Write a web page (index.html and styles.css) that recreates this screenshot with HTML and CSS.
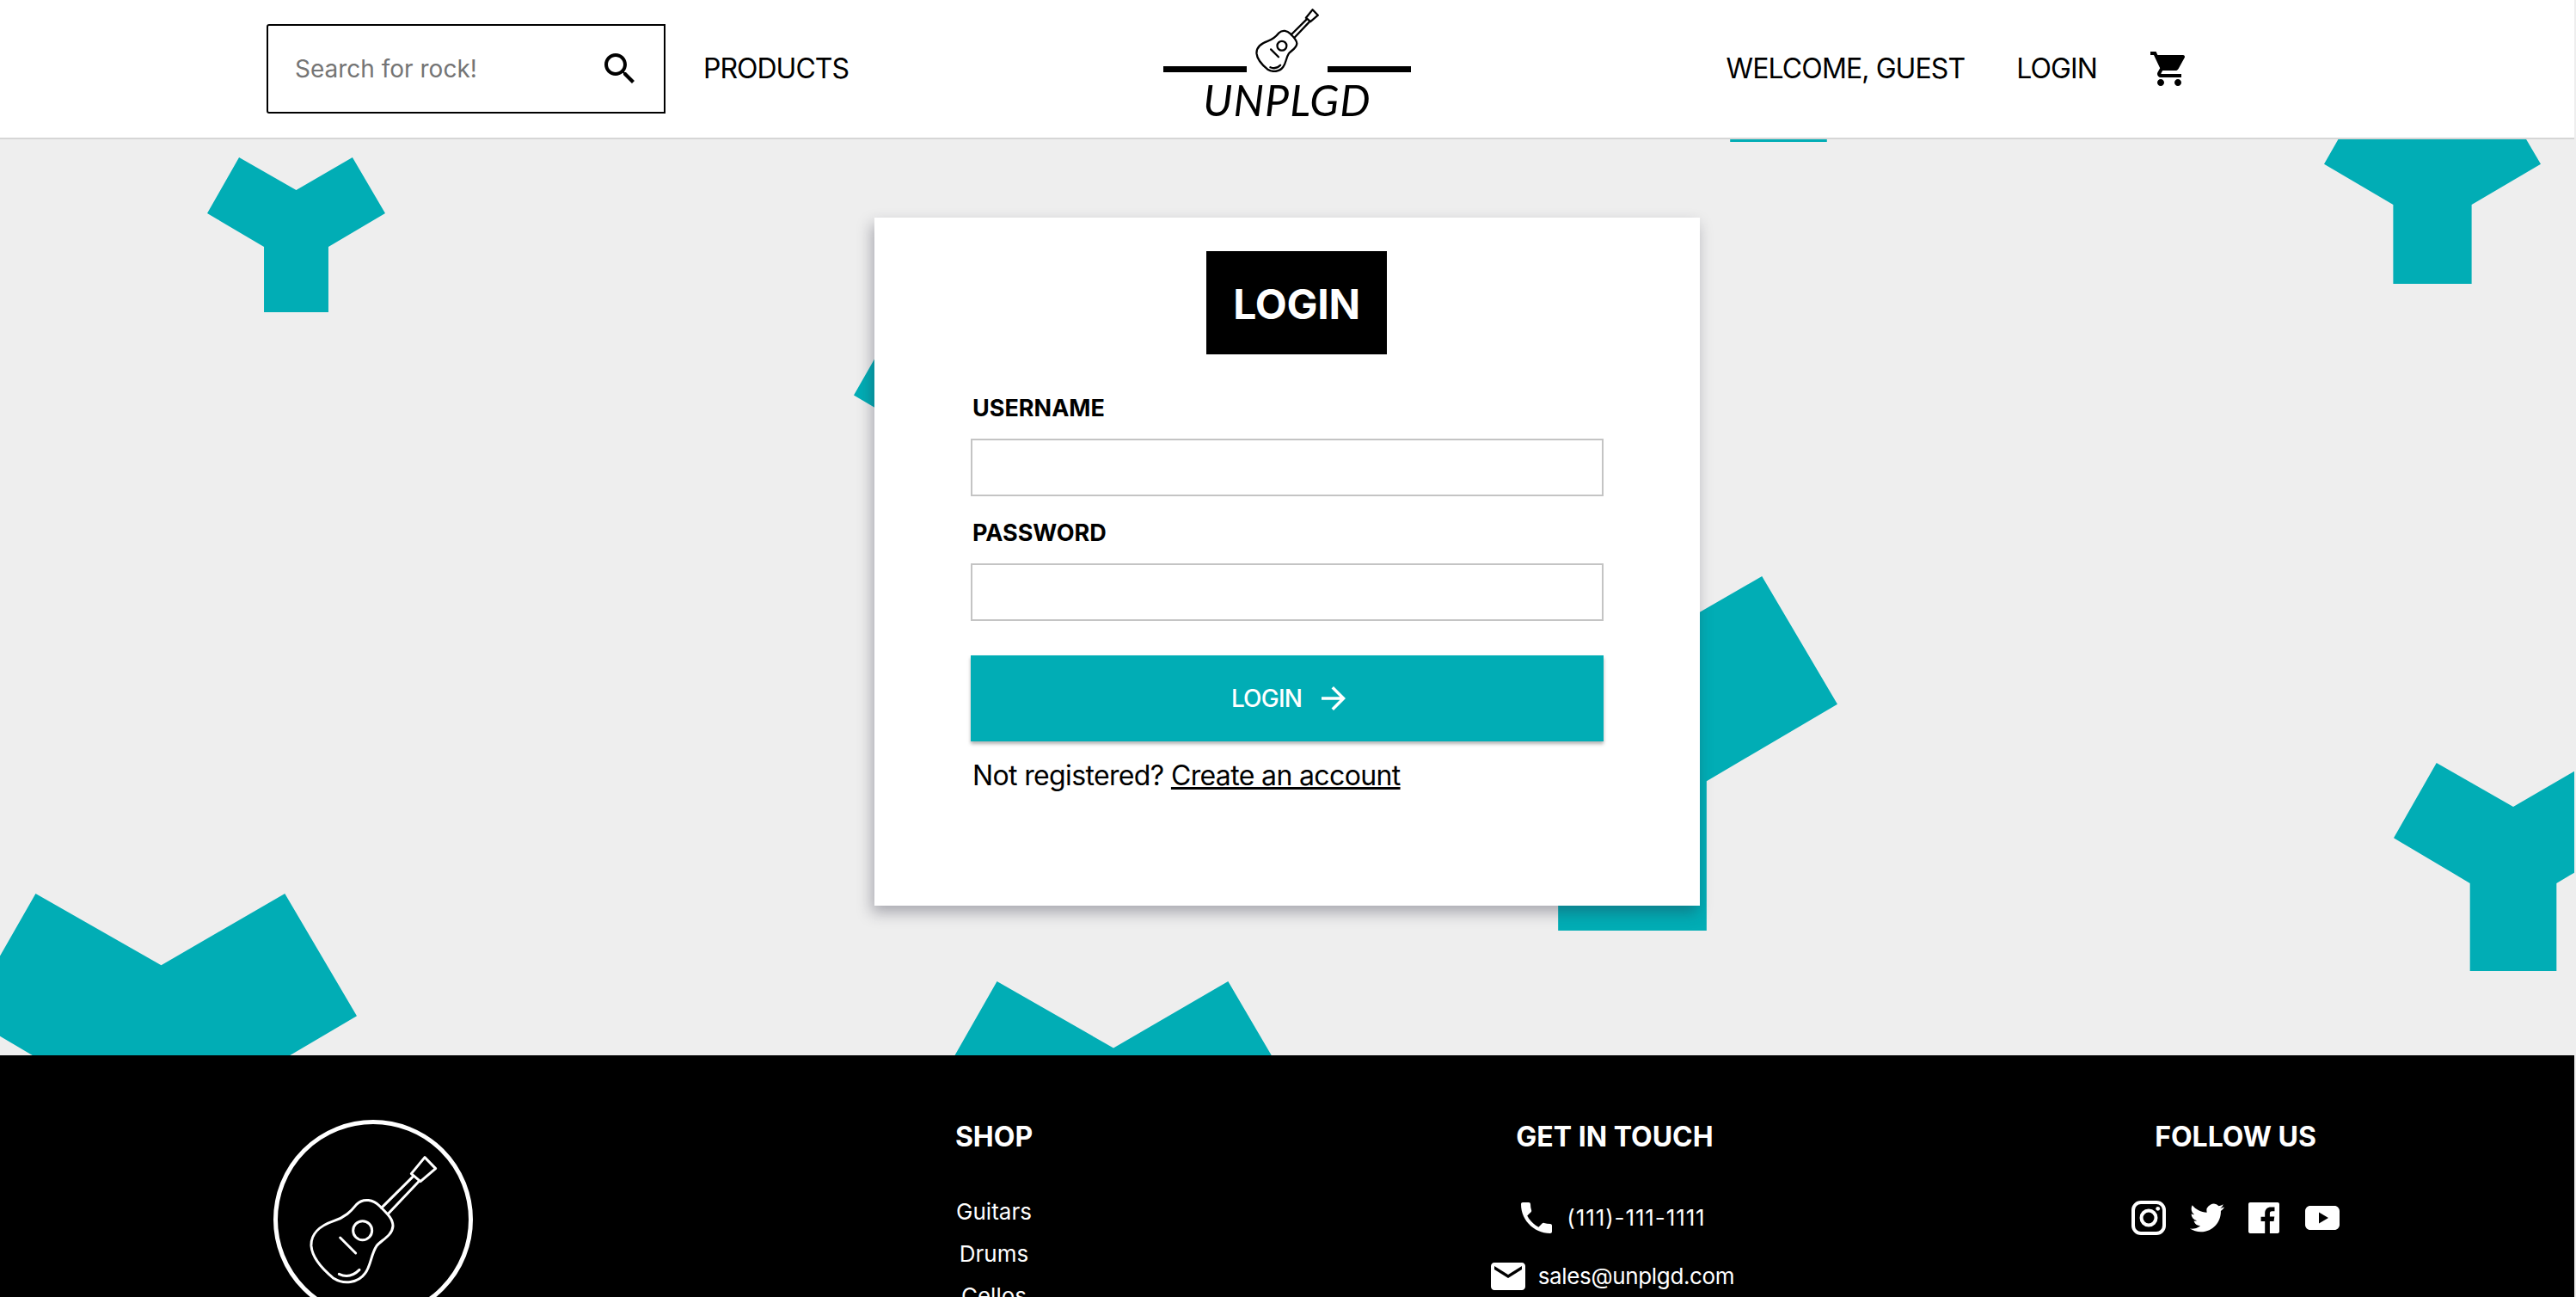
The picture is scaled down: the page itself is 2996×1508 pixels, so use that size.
FILE: index.html
```html
<!DOCTYPE html>
<html lang="en">
<head>
<meta charset="utf-8">
<title>UNPLGD - Login</title>
<link rel="stylesheet" href="styles.css">
</head>
<body>
<svg class="defs" aria-hidden="true">
  <symbol id="guitar" viewBox="298 248 450 450">
    <g fill="none" stroke="currentColor" stroke-linecap="round" stroke-linejoin="round">
      <path d="M545 425C525 405 490 395 465 420C445 445 425 465 385 478C335 495 305 525 307 565C310 605 345 645 385 678C420 700 470 695 495 660C515 635 515 595 535 565C550 545 590 530 592 495C592 470 570 450 545 425Z"/>
      <circle cx="486" cy="511" r="33"/>
      <path d="M408 536L462 590"/>
      <path d="M404 663C430 675 455 668 475 648"/>
      <path d="M552 432L660 325M576 452L682 340"/>
      <path d="M703 256L741 295L688 340L656 313Z"/>
    </g>
  </symbol>
</svg>
<div class="page">
  <header class="site-header">
    <div class="header-left">
      <form class="search">
        <input class="search-input" type="text" placeholder="Search for rock!">
        <svg class="icon-48" viewBox="0 0 24 24"><path d="M15.5 14h-.79l-.28-.27C15.41 12.59 16 11.11 16 9.5 16 5.91 13.09 3 9.5 3S3 5.91 3 9.5 5.91 16 9.5 16c1.61 0 3.09-.59 4.23-1.57l.27.28v.79l5 4.99L20.49 19l-4.99-5zm-6 0C7.01 14 5 11.99 5 9.5S7.01 5 9.5 5 14 7.01 14 9.5 11.99 14 9.5 14z"/></svg>
      </form>
      <a class="nav-link" href="#">PRODUCTS</a>
    </div>
    <a class="logo" href="#">
      <span class="logo-art">
        <span class="logo-rule"></span>
        <svg class="logo-guitar"><use href="#guitar"/></svg>
        <span class="logo-rule"></span>
      </span>
      <span class="logo-name">UNPLGD</span>
    </a>
    <div class="header-right">
      <span class="nav-link">WELCOME, GUEST</span>
      <a class="nav-link" href="#">LOGIN</a>
      <svg class="icon-48" viewBox="0 0 24 24"><path d="M7 18c-1.1 0-1.99.9-1.99 2S5.9 22 7 22s2-.9 2-2-.9-2-2-2zM1 2v2h2l3.6 7.59-1.35 2.45c-.16.28-.25.61-.25.96 0 1.1.9 2 2 2h12v-2H7.42c-.14 0-.25-.11-.25-.25l.03-.12.9-1.63h7.45c.75 0 1.41-.41 1.75-1.03l3.58-6.49c.08-.14.12-.31.12-.48 0-.55-.45-1-1-1H5.21l-.94-2H1zm16 16c-1.1 0-1.99.9-1.99 2s.89 2 1.99 2 2-.9 2-2-.9-2-2-2z"/></svg>
    </div>
  </header>

  <main class="stage">
    <div class="shape shape-a"></div>
    <div class="shape shape-b"></div>
    <div class="shape shape-c"></div>
    <div class="shape shape-d"></div>
    <div class="shape shape-e"></div>
    <div class="shape shape-f"></div>
    <div class="shape shape-g"></div>
    <div class="shape shape-h"></div>

    <section class="card">
      <h1 class="card-title">LOGIN</h1>
      <form class="form">
        <label class="field-label" for="username">USERNAME</label>
        <input class="field-input" id="username" type="text">
        <label class="field-label" for="password">PASSWORD</label>
        <input class="field-input" id="password" type="password">
        <button class="submit" type="button">LOGIN
          <svg class="submit-arrow" viewBox="0 0 24 24"><path d="M12 4l-1.41 1.41L16.17 11H4v2h12.17l-5.58 5.59L12 20l8-8z"/></svg>
        </button>
        <p class="register">Not registered? <a href="#">Create an account</a></p>
      </form>
    </section>
  </main>

  <footer class="site-footer">
    <div class="foot-col">
      <svg class="foot-logo" viewBox="0 0 232 232">
        <circle cx="116" cy="116" r="113.5" fill="none" stroke="currentColor" stroke-width="5"/>
        <svg x="41" y="41" width="150" height="150"><use href="#guitar"/></svg>
      </svg>
    </div>
    <div class="foot-col">
      <h2 class="foot-title">SHOP</h2>
      <ul class="foot-list">
        <li>Guitars</li>
        <li>Drums</li>
        <li>Cellos</li>
      </ul>
    </div>
    <div class="foot-col">
      <h2 class="foot-title">GET IN TOUCH</h2>
      <div class="contact">
        <div class="contact-row">
          <svg class="icon-48" viewBox="0 0 24 24"><path d="M6.62 10.79c1.44 2.83 3.76 5.14 6.59 6.59l2.2-2.2c.27-.27.67-.36 1.02-.24 1.12.37 2.33.57 3.57.57.55 0 1 .45 1 1V20c0 .55-.45 1-1 1-9.39 0-17-7.61-17-17 0-.55.45-1 1-1h3.5c.55 0 1 .45 1 1 0 1.25.2 2.45.57 3.57.11.35.03.74-.25 1.02l-2.2 2.2z"/></svg>
          <span class="contact-phone">(111)-111-1111</span>
        </div>
        <div class="contact-row">
          <svg class="icon-48" viewBox="0 0 24 24"><path d="M20 4H4c-1.1 0-1.99.9-1.99 2L2 18c0 1.1.9 2 2 2h16c1.1 0 2-.9 2-2V6c0-1.1-.9-2-2-2zm0 4l-8 5-8-5V6l8 5 8-5v2z"/></svg>
          <span class="contact-mail">sales@unplgd.com</span>
        </div>
      </div>
    </div>
    <div class="foot-col">
      <h2 class="foot-title">FOLLOW US</h2>
      <div class="social">
        <svg class="social-icon" viewBox="0 0 40 40"><rect x="2" y="2" width="36" height="36" rx="9" fill="none" stroke="currentColor" stroke-width="4"/><circle cx="20" cy="20" r="8.5" fill="none" stroke="currentColor" stroke-width="4"/><circle cx="30.7" cy="9.3" r="2.4"/></svg>
        <svg class="social-icon" viewBox="0 0 24 24"><path d="M23.953 4.57a10 10 0 01-2.825.775 4.958 4.958 0 002.163-2.723c-.951.555-2.005.959-3.127 1.184a4.92 4.92 0 00-8.384 4.482C7.69 8.095 4.067 6.13 1.64 3.162a4.822 4.822 0 00-.666 2.475c0 1.71.87 3.213 2.188 4.096a4.904 4.904 0 01-2.228-.616v.06a4.923 4.923 0 003.946 4.827 4.996 4.996 0 01-2.212.085 4.936 4.936 0 004.604 3.417 9.867 9.867 0 01-6.102 2.105c-.39 0-.779-.023-1.17-.067a13.995 13.995 0 007.557 2.209c9.053 0 13.998-7.496 13.998-13.985 0-.21 0-.42-.015-.63A9.935 9.935 0 0024 4.59z"/></svg>
        <svg class="social-icon social-fb" viewBox="0 0 24 24"><path d="M22.7 0H1.3C.6 0 0 .6 0 1.3v21.4C0 23.4.6 24 1.3 24h11.5v-9.3H9.7v-3.6h3.1V8.4c0-3.1 1.9-4.8 4.7-4.8 1.3 0 2.5.1 2.8.1v3.2h-1.9c-1.5 0-1.8.7-1.8 1.8v2.3h3.6l-.5 3.6h-3.1V24h6.1c.7 0 1.3-.6 1.3-1.3V1.3C24 .6 23.4 0 22.7 0z"/></svg>
        <svg class="social-icon" viewBox="0 0 40 40"><path fill-rule="evenodd" d="M6 6h28c3.300 0 6 2.700 6 6v16c0 3.300-2.700 6-6 6H6c-3.300 0-6-2.700-6-6V12c0-3.300 2.700-6 6-6zM16 13.500v13L27 20z"/></svg>
      </div>
    </div>
  </footer>
</div>
</body>
</html>
```
FILE: styles.css
```css
* { box-sizing: border-box; }

html, body {
  margin: 0;
  height: 1508px;
  overflow: hidden;
  background: #eee;
}

body {
  font-family: Inter, "Liberation Sans", sans-serif;
  color: #000;
  padding: 0 2px 0 0;
}

a { color: inherit; text-decoration: none; }

.defs { display: none; }

.page { display: flex; flex-direction: column; height: 1508px; }

.icon-48 { width: 48px; height: 48px; flex: none; fill: currentColor; }

/* Header */
.site-header {
  flex: none;
  height: 162px;
  background: #fff;
  border-bottom: 2px solid #d6d6d6;
  display: grid;
  grid-template-columns: 1fr 288px 1fr;
  align-items: center;
  position: relative;
  z-index: 2;
}

.header-left {
  display: flex;
  align-items: center;
  gap: 44px;
  padding-left: 310px;
}

.header-right {
  display: flex;
  align-items: center;
  justify-content: flex-end;
  gap: 60px;
  padding-right: 447px;
}

.header-right .nav-link { letter-spacing: -.9px; position: relative; }

.search {
  width: 464px;
  height: 104px;
  border: 2px solid #000;
  border-radius: 3px 0 0 3px;
  display: flex;
  align-items: center;
  padding: 0 27px 0 31px;
}

.search-input {
  flex: 1;
  min-width: 0;
  border: 0;
  outline: 0;
  padding: 0;
  background: transparent;
  font-family: Inter, sans-serif;
  font-size: 28px;
}

.search-input::placeholder { color: #757575; opacity: 1; }

.nav-link { font-size: 32px; line-height: 40px; letter-spacing: -1px; white-space: nowrap; }

.logo {
  display: flex;
  flex-direction: column;
  align-items: center;
  align-self: start;
  padding-top: 10px;
}

.logo-art { display: flex; align-items: flex-end; gap: 10px; }

.logo-rule { width: 97px; height: 7px; background: #000; }

.logo-guitar { width: 74px; height: 74px; stroke-width: 14px; }

.logo-name {
  font-family: Lato, sans-serif;
  font-style: italic;
  font-weight: 400;
  font-size: 50px;
  line-height: 56px;
  letter-spacing: 1px;
  margin-top: 4px;
}

/* Stage */
.stage {
  flex: none;
  height: 1065px;
  position: relative;
  overflow: hidden;
  display: flex;
  justify-content: center;
  align-items: flex-start;
  padding-top: 91px;
}

.shape {
  position: absolute;
  background: #01adb5;
  clip-path: polygon(17.9% 0, 50% 21.1%, 81.6% 0, 100% 36.1%, 68.1% 57.8%, 68.1% 100%, 31.9% 100%, 31.9% 57.8%, 0 36.1%);
}

.shape-a { left: 241px; top: 21px; width: 207px; height: 180px; }
.shape-b { left: 2703px; top: -50px; width: 252px; height: 218px; }
.shape-c { left: 1913px; top: -267px; width: 311px; height: 270px; }
.shape-d { left: 2784px; top: 725px; width: 278px; height: 242px; }
.shape-e { left: 1660px; top: 508px; width: 477px; height: 412px; }
.shape-f { left: 993px; top: 200px; width: 311px; height: 270px; }
.shape-g { left: -40px; top: 877px; width: 455px; height: 394px; }
.shape-h { left: 1084px; top: 979px; width: 422px; height: 367px; }

.card {
  position: relative;
  width: 960px;
  height: 800px;
  background: #fff;
  box-shadow: -3px 8px 16px rgba(40, 40, 60, .35);
  padding: 39px 112px 0;
  display: flex;
  flex-direction: column;
}

.card-title {
  align-self: center;
  margin: 0 0 0 22px;
  width: 210px;
  height: 120px;
  background: #000;
  color: #fff;
  font-size: 48px;
  font-weight: 700;
  letter-spacing: -.3px;
  line-height: 123px;
  text-align: center;
}

.form { display: flex; flex-direction: column; }

.field-label {
  font-size: 27px;
  font-weight: 700;
  line-height: 34px;
  padding-left: 2px;
  margin-top: 46px;
  margin-bottom: 18px;
}

.field-input + .field-label { margin-top: 26px; }

.field-input {
  height: 67px;
  border: 2px solid #c4c4c4;
  background: #fff;
  outline: 0;
  width: 736px;
}

.submit {
  width: 736px;
  height: 100px;
  margin-top: 40px;
  border: 0;
  padding: 0 0 0 10px;
  background: #01adb5;
  color: #fff;
  font-family: Inter, sans-serif;
  font-size: 28px;
  font-weight: 500;
  letter-spacing: -.8px;
  box-shadow: 0 3px 4px rgba(0, 0, 0, .3);
  display: flex;
  align-items: center;
  justify-content: center;
  gap: 16px;
}

.submit-arrow { width: 42px; height: 42px; fill: currentColor; }

.register {
  margin: 20px 0 0 2px;
  font-size: 32px;
  line-height: 40px;
  letter-spacing: -.64px;
}

.register a { text-decoration: underline; text-decoration-thickness: 3px; }

/* Footer */
.site-footer {
  flex: 1;
  background: #000;
  color: #fff;
  display: grid;
  grid-template-columns: repeat(4, 722px);
  padding: 75px 0 0 73px;
  overflow: hidden;
}

.foot-col { display: flex; flex-direction: column; align-items: center; text-align: center; }

.foot-logo { width: 232px; height: 232px; stroke-width: 9px; flex: none; }

.foot-title { margin: 0; font-size: 32px; font-weight: 700; line-height: 40px; white-space: nowrap; }

.foot-list { list-style: none; margin: 42px 0 0; padding: 0; font-size: 26px; line-height: 49px; }

.contact { margin-top: 50px; display: flex; flex-direction: column; align-items: center; gap: 20px; margin-right: 9px; }

.contact-row { display: flex; align-items: center; gap: 11px; font-size: 26px; line-height: 48px; }

.contact-phone { letter-spacing: .9px; }

.contact-mail { letter-spacing: -.35px; }

.social { margin-top: 54px; display: flex; align-items: center; gap: 28px; }

.social-icon { width: 40px; height: 40px; fill: currentColor; }

.social-fb { width: 36px; height: 36px; margin-right: 2px; }
```
